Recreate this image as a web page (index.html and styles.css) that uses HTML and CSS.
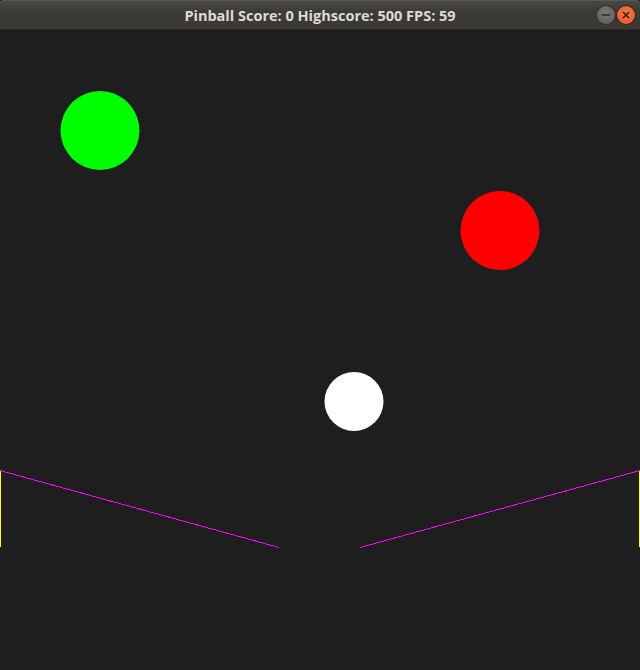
FILE: index.html
```html
<!DOCTYPE html>
<html>
<head>
<meta charset="utf-8">
<link rel="stylesheet" href="styles.css">
</head>
<body>
<div class="window">
  <header class="titlebar">
    <span class="title">Pinball Score: 0 Highscore: 500 FPS: 59</span>
    <div class="controls">
      <span class="btn min"><svg width="18" height="18" viewBox="0 0 18 18"><line x1="5" y1="9" x2="13" y2="9" stroke="#2b2a27" stroke-width="1.5"/></svg></span>
      <span class="btn close"><svg width="18" height="18" viewBox="0 0 18 18"><path d="M6 6 L12 12 M12 6 L6 12" stroke="#3a1a0c" stroke-width="1.5"/></svg></span>
    </div>
  </header>
  <svg class="board" width="640" height="640" viewBox="0 30 640 640">
    <rect x="0" y="30" width="640" height="640" fill="#1e1e1e"/>
    <circle cx="100" cy="130.5" r="39.5" fill="#00ff00"/>
    <circle cx="500" cy="230.5" r="39.5" fill="#ff0000"/>
    <circle cx="354" cy="401.5" r="29.5" fill="#ffffff"/>
    <g shape-rendering="crispEdges">
      <line x1="0.5" y1="470" x2="0.5" y2="547" stroke="#ffff00" stroke-width="1"/>
      <line x1="639.5" y1="470" x2="639.5" y2="547" stroke="#ffff00" stroke-width="1"/>
      <line x1="0" y1="470.5" x2="279" y2="547.5" stroke="#ff00ff" stroke-width="1"/>
      <line x1="360" y1="547.5" x2="640" y2="470.5" stroke="#ff00ff" stroke-width="1"/>
    </g>
  </svg>
</div>
</body>
</html>
```
FILE: styles.css
```css
html, body {
  margin: 0;
  padding: 0;
  background: #1e1e1e;
}
.window {
  width: 640px;
  height: 670px;
  display: flex;
  flex-direction: column;
  overflow: hidden;
}
.titlebar {
  position: relative;
  height: 30px;
  flex: none;
  display: flex;
  align-items: center;
  justify-content: center;
  background: linear-gradient(#4a4944, #3c3b37 40%, #393834);
  border-radius: 4px 4px 0 0;
  box-shadow: inset 0 1px 0 #5a5954;
  border-bottom: 1px solid #2a2926;
  box-sizing: border-box;
}
.title {
  font-family: "Open Sans", "DejaVu Sans", sans-serif;
  font-weight: 700;
  font-size: 14.5px;
  color: #dfdbd2;
  letter-spacing: 0;
  margin-top: 1px;
}
.controls {
  position: absolute;
  right: 5px;
  top: 6px;
  display: flex;
  gap: 2px;
}
.btn {
  width: 18px;
  height: 18px;
  border-radius: 50%;
  display: flex;
}
.min {
  background: radial-gradient(circle at 50% 40%, #7a7975, #5b5a56);
  box-shadow: 0 0 0 1px #2f2e2b;
}
.close {
  background: radial-gradient(circle at 50% 40%, #f37a4c, #e2531f);
  box-shadow: 0 0 0 1px #3a2218;
}
.board {
  display: block;
  flex: none;
}
```
